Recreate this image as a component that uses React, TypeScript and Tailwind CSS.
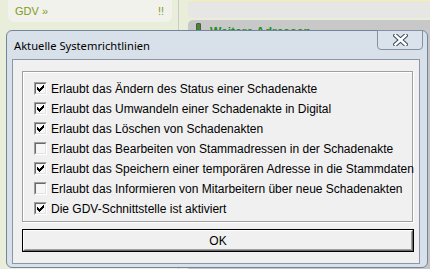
import React from 'react';

const rules = [
  { label: 'Erlaubt das Ändern des Status einer Schadenakte', checked: true },
  { label: 'Erlaubt das Umwandeln einer Schadenakte in Digital', checked: true },
  { label: 'Erlaubt das Löschen von Schadenakten', checked: true },
  { label: 'Erlaubt das Bearbeiten von Stammadressen in der Schadenakte', checked: false },
  { label: 'Erlaubt das Speichern einer temporären Adresse in die Stammdaten', checked: true },
  { label: 'Erlaubt das Informieren von Mitarbeitern über neue Schadenakten', checked: false },
  { label: 'Die GDV-Schnittstelle ist aktiviert', checked: true },
];

// klassisches Windows-Häkchen, Pixel für Pixel
function CheckMark() {
  const cols = [2, 3, 4, 3, 2, 1, 0];
  return (
    <svg width="7" height="7" viewBox="0 0 7 7" shapeRendering="crispEdges" className="block">
      {cols.map((y, x) => (
        <rect key={x} x={x} y={y} width="1" height="3" fill="#000" />
      ))}
    </svg>
  );
}

function ClassicCheckbox({ checked }: { checked: boolean }) {
  return (
    <div className="w-[13px] h-[13px] border-t border-l border-[#a0a0a0] border-r border-b border-r-white border-b-white shrink-0">
      <div className="w-full h-full border-t border-l border-[#696969] border-r border-b border-r-[#e3e3e3] border-b-[#e3e3e3] bg-[#f6f6f6] flex items-center justify-center">
        {checked && <CheckMark />}
      </div>
    </div>
  );
}

function CloseGlyph() {
  return (
    <svg width="15" height="12" viewBox="0 0 15 12" className="block">
      <path d="M2.5 1.5 L12.5 10.5 M12.5 1.5 L2.5 10.5" stroke="#3b4a5c" strokeWidth="4.5" strokeLinecap="square" />
      <path d="M2.5 1.5 L12.5 10.5 M12.5 1.5 L2.5 10.5" stroke="#ffffff" strokeWidth="2.5" strokeLinecap="square" />
    </svg>
  );
}

export default function App() {
  return (
    <div className="relative w-[430px] h-[269px] overflow-hidden bg-[#e8eed9] text-[11px]" style={{ fontFamily: '"Liberation Sans", Arial, sans-serif' }}>
      {/* Hintergrund der Anwendung */}
      <div className="flex h-full">
        <div className="w-[178px] shrink-0 pl-[8px] pr-[6px]">
          <div className="h-[22px] bg-[#f1f2ec] rounded-b-[6px] flex items-center justify-between pl-[7px] pr-[8px] text-[11px] text-[#7f9a22]">
            <span>GDV »</span>
            <span>!!</span>
          </div>
        </div>
        <div className="w-px bg-[#c9cdbf] shrink-0"></div>
        <div className="flex-1 pl-[9px] flex flex-col">
          <div className="h-[18px] bg-[#e6e6e4] rounded-bl-[6px] border-t border-[#f4f1a8]"></div>
          <div className="mt-[2px] h-[14px] bg-[#c8c8c8] rounded-tl-[5px] flex items-end gap-[9px] pl-[8px]">
            <div className="w-[5px] h-[10px] bg-[#3c8a2a] border border-[#555] rounded-t-[1px] mb-[1px]"></div>
            <span className="font-bold text-[12px] leading-none text-[#1b8f1b] translate-y-[4px]">Weitere Adressen</span>
          </div>
          <div className="flex-1 bg-[#c4c4c4]"></div>
        </div>
      </div>

      {/* Dialogfenster */}
      <div className="absolute left-[6px] top-[30px] w-[422px] h-[238px] border border-[#73859a] rounded-[6px] bg-[#d8e1ea] flex flex-col">
        <div className="h-[28px] flex items-start pl-[7px] pr-[4px]">
          <span className="mt-[7px] text-[11.2px] text-black" style={{ fontFamily: '"Noto Sans", "Open Sans", sans-serif' }}>Aktuelle Systemrichtlinien</span>
          <div className="ml-auto w-[46px] h-[20px] -mt-px border border-[#8591a3] rounded-b-[4px] bg-[#dae3ec] flex items-center justify-center">
            <CloseGlyph />
          </div>
        </div>
        <div className="ml-[5px] mr-[7px] h-[205px] border border-[#8b97a6] bg-[#f0f0f0] px-[9px] pt-[11px] flex flex-col">
          <div className="w-[391px] h-[151px] border border-[#a0a0a0] shadow-[inset_1px_1px_0_#fff,1px_1px_0_#fff] pl-[11px] pt-[10px] flex flex-col gap-[7px]">
            {rules.map((r) => (
              <div key={r.label} className="flex items-center gap-[4px] h-[13px]">
                <ClassicCheckbox checked={r.checked} />
                <span className="text-[12px] text-black whitespace-nowrap leading-none">{r.label}</span>
              </div>
            ))}
          </div>
          <button className="mt-[7px] w-[392px] h-[23px] border border-black bg-[#f0f0f0] p-0">
            <div className="w-full h-full border border-t-white border-l-white border-r-[#696969] border-b-[#696969] flex items-center justify-center">
              <div className="w-full h-full border border-transparent border-r-[#a0a0a0] border-b-[#a0a0a0] flex items-center justify-center text-[12px] text-black">OK</div>
            </div>
          </button>
        </div>
      </div>
    </div>
  );
}
